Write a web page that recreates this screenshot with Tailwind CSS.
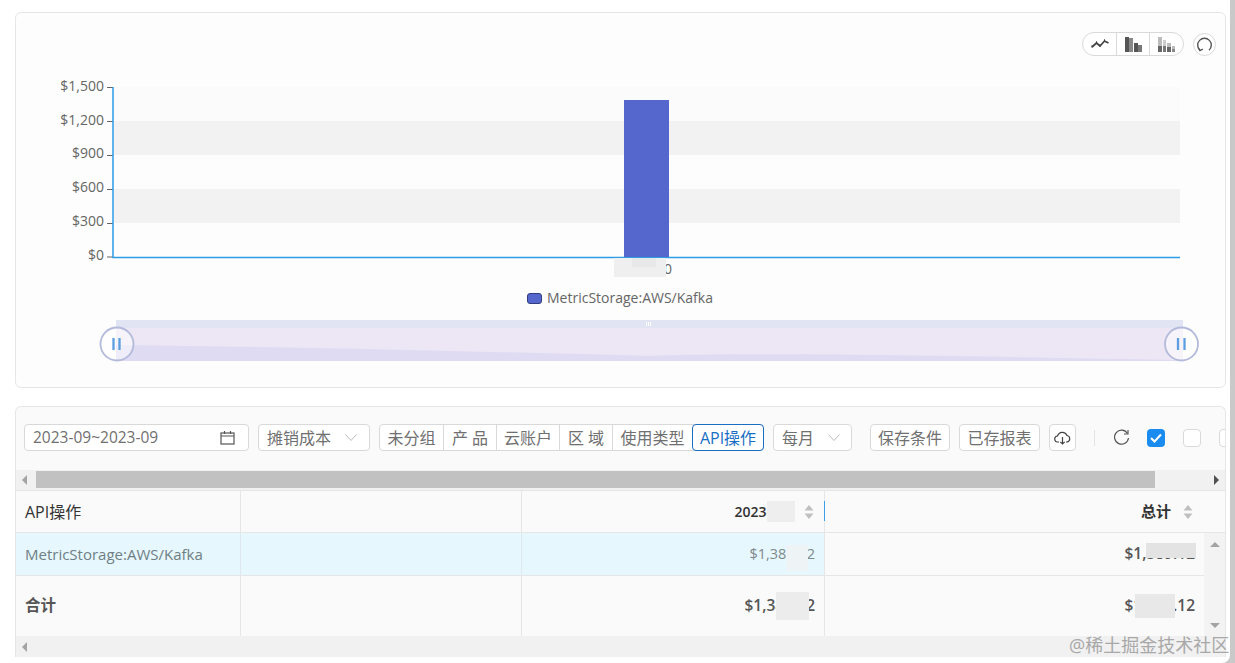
<!DOCTYPE html>
<html lang="zh-CN">
<head>
<meta charset="UTF-8" />
<meta name="viewport" content="width=device-width, initial-scale=1.0" />
<title>成本报表</title>
<script src="https://cdn.jsdelivr.net/npm/@tailwindcss/browser@4"></script>
</head>
<body class="bg-[#c9c9c9] overflow-hidden h-[663px] font-['Open_Sans','Noto_Sans_CJK_SC',sans-serif] text-[14px] text-[#666]">
<div class="relative w-[1230px] h-[663px] bg-white rounded-br-lg pt-3 pl-[15px] overflow-hidden">

  <!-- chart card -->
  <section class="w-[1211px] h-[376px] bg-[#fdfdfd] border border-[#e6e6e6] rounded-md">
    <div class="flex justify-end items-center gap-[9px] pt-[19px] pr-[9px] h-[43px]">
      <div class="flex h-6 border border-[#d9d9d9] rounded-full bg-white">
        <button class="w-[34px] flex items-center justify-center border-r border-[#d9d9d9]">
          <svg width="18" height="12" viewBox="0 0 18 12" fill="none" stroke="#444" stroke-width="1.700"><path d="M1 9l4.500-4 3.500 3 4.500-5 4 2"/><path d="M.5 8.500h1M5 4.500h1M8.500 7.500h1M13 2.500h1" stroke-width="2.500"/></svg>
        </button>
        <button class="w-[33px] flex items-center justify-center border-r border-[#d9d9d9]">
          <svg width="17" height="15" viewBox="0 0 17 15"><rect x="0" y="0" width="4" height="15" fill="#555"/><rect x="4" y="1" width="4" height="14" fill="#888"/><rect x="9" y="6" width="4" height="9" fill="#555"/><rect x="13" y="8" width="4" height="7" fill="#777"/></svg>
        </button>
        <button class="w-[33px] flex items-center justify-center">
          <svg width="17" height="15" viewBox="0 0 17 15"><rect x="0" y="0" width="4" height="9" fill="#bbb"/><rect x="0" y="9" width="4" height="6" fill="#666"/><rect x="5" y="3" width="3" height="6" fill="#ccc"/><rect x="5" y="9" width="3" height="6" fill="#777"/><rect x="9" y="6" width="4" height="4" fill="#bbb"/><rect x="9" y="10" width="4" height="5" fill="#666"/><rect x="14" y="9" width="3" height="3" fill="#bbb"/><rect x="14" y="12" width="3" height="3" fill="#888"/></svg>
        </button>
      </div>
      <button class="w-[23px] h-[23px] flex items-center justify-center border border-[#d9d9d9] rounded-full bg-white">
        <svg width="17" height="17" viewBox="0 0 15 15" fill="none" stroke="#555" stroke-width="1.200"><path d="M3.500 12.500A6 6 0 1 1 11.500 12.500"/><path d="M2 10.200l1.500 2.600 2.500-1.200"/></svg>
      </button>
    </div>
    <!-- viewBox uses page coordinates -->
    <svg class="block" width="1209" height="331" viewBox="16 56 1209 331" font-family="'Open Sans','Noto Sans CJK SC',sans-serif" font-size="14" fill="#666">
      <rect x="114" y="87" width="1066" height="34" fill="#fbfbfb"/>
      <rect x="114" y="121" width="1066" height="34" fill="#f2f2f2"/>
      <rect x="114" y="155" width="1066" height="34" fill="#fdfdfd"/>
      <rect x="114" y="189" width="1066" height="34" fill="#f2f2f2"/>
      <rect x="114" y="223" width="1066" height="34" fill="#fdfdfd"/>
      <path d="M107 87.500h6M107 121.500h6M107 155.500h6M107 189.500h6M107 223.500h6M107 257h6" stroke="#666" stroke-width="1"/>
      <path d="M113 87V257.500H1180" fill="none" stroke="#2e9be6" stroke-width="1.500"/>
      <g text-anchor="end">
        <text x="104" y="90.500">$1,500</text>
        <text x="104" y="124.500">$1,200</text>
        <text x="104" y="158">$900</text>
        <text x="104" y="192">$600</text>
        <text x="104" y="226">$300</text>
        <text x="104" y="260">$0</text>
      </g>
      <rect x="624" y="100" width="45" height="157" fill="#5566cc"/>
      <text x="664" y="274">0</text>
      <rect x="614" y="258" width="52" height="19" fill="#efefef"/>
      <rect x="632" y="258" width="24" height="9" fill="#e8e8e8"/>
      <rect x="527.500" y="293.500" width="14" height="10" rx="2.500" fill="#5566cc" stroke="#333d80"/>
      <text x="547" y="303">MetricStorage:AWS/Kafka</text>

      <!-- range slider -->
      <rect x="116" y="320" width="1067" height="8" fill="#e1e4f3"/>
      <rect x="116" y="328" width="1067" height="33" fill="#ece6f5"/>
      <path d="M116 345C300 347 500 352 650 356C750 352 950 356 1183 360V361H116Z" fill="#dedbf2"/>
      <path d="M646.500 322v4M648.500 322v4M650.500 322v4" stroke="#fff"/>
      <g fill="#ffffff" fill-opacity="0.5" stroke="#b3bada" stroke-width="1.800">
        <circle cx="117" cy="344" r="16.500"/>
        <circle cx="1181.500" cy="344" r="16.500"/>
      </g>
      <path d="M113.500 338v12M119.500 338v12M1178 338v12M1184.500 338v12" stroke="#5b9fe0" stroke-width="2.300"/>
    </svg>
  </section>

  <!-- report card -->
  <section class="mt-[18px] w-[1211px] h-[251px] bg-[#fafafa] border border-b-0 border-[#e6e6e6] rounded-t-md overflow-hidden">
    <div class="flex items-center h-[63px] pb-[2px] pl-2 whitespace-nowrap overflow-hidden text-[16px] text-[#707070]">
      <div class="shrink-0 w-[225px] h-[27px] bg-white border border-[#d9d9d9] rounded flex items-center justify-between pl-2 pr-[13px]">
        <span class="text-[15.500px]">2023-09~2023-09</span>
        <svg width="15" height="14" viewBox="0 0 15 14" fill="none" stroke="#555" stroke-width="1.200"><rect x="1" y="2" width="13" height="11"/><path d="M1 5h13M4.500 0v3M10.500 0v3"/></svg>
      </div>
      <div class="shrink-0 ml-[9px] w-28 h-[27px] bg-white border border-[#d9d9d9] rounded flex items-center justify-between pl-2 pr-[12px]">
        <span>摊销成本</span>
        <svg width="12" height="7" viewBox="0 0 12 7" fill="none" stroke="#bbb"><path d="M.5.500l5.500 6 5.500-6"/></svg>
      </div>
      <div class="shrink-0 ml-[9px] flex h-[27px] bg-white border border-[#d9d9d9] rounded">
        <span class="w-[64px] flex items-center justify-center border-r border-[#d9d9d9]">未分组</span>
        <span class="w-[53px] flex items-center justify-center border-r border-[#d9d9d9]">产 品</span>
        <span class="w-[63px] flex items-center justify-center border-r border-[#d9d9d9]">云账户</span>
        <span class="w-[53px] flex items-center justify-center border-r border-[#d9d9d9]">区 域</span>
        <span class="w-[79px] flex items-center justify-center">使用类型</span>
        <span class="w-[72px] -my-px -mr-px flex items-center justify-center border border-[#1a6fc4] rounded text-[#1a6fc4]">API操作</span>
      </div>
      <div class="shrink-0 ml-[9px] w-[79px] h-[27px] bg-white border border-[#d9d9d9] rounded flex items-center justify-between pl-2 pr-[11px]">
        <span>每月</span>
        <svg width="12" height="7" viewBox="0 0 12 7" fill="none" stroke="#bbb"><path d="M.5.500l5.500 6 5.500-6"/></svg>
      </div>
      <button class="shrink-0 ml-[18px] w-20 h-[27px] bg-white border border-[#d9d9d9] rounded">保存条件</button>
      <button class="shrink-0 ml-[9px] w-[81px] h-[27px] bg-white border border-[#d9d9d9] rounded">已存报表</button>
      <button class="shrink-0 ml-[9px] w-[27px] h-[27px] bg-white border border-[#d9d9d9] rounded flex items-center justify-center">
        <svg width="17" height="14" viewBox="0 0 17 14" fill="none" stroke="#444" stroke-width="1.200"><path d="M5 11H4A3 3 0 0 1 3.500 5 5 5 0 0 1 13 4.500 3.300 3.300 0 0 1 13 11h-1"/><path d="M8.500 6v7M6.300 10.800l2.200 2.200 2.200-2.200"/></svg>
      </button>
      <span class="shrink-0 ml-[18px] w-px h-[16px] bg-[#e3e3e3]"></span>
      <svg class="shrink-0 ml-[18px]" width="17" height="17" viewBox="0 0 17 17" fill="none" stroke="#555" stroke-width="1.200"><path d="M14.500 4.500A7 7 0 1 0 15.500 9"/><path d="M15 1v4h-4"/></svg>
      <span class="shrink-0 ml-[17px] w-[18px] h-[18px] bg-[#1a8cf0] rounded-sm flex items-center justify-center">
        <svg width="12" height="10" viewBox="0 0 12 10" fill="none" stroke="#fff" stroke-width="2"><path d="M1 5l3.500 3.500L11 1.500"/></svg>
      </span>
      <span class="shrink-0 ml-[18px] w-[18px] h-[18px] bg-white border border-[#d9d9d9] rounded-sm"></span>
      <span class="shrink-0 ml-[18px] w-[18px] h-[18px] bg-white border border-[#d9d9d9] rounded-sm"></span>
    </div>

    <!-- top scrollbar -->
    <div class="flex items-center justify-between h-5 bg-[#f1f1f1] pr-[6px] pl-[6px]">
      <span class="w-0 h-0 border-y-[5px] border-y-transparent border-r-[5px] border-r-[#a3a3a3]"></span>
      <span class="w-0 h-0 border-y-[5px] border-y-transparent border-l-[5px] border-l-[#505050]"></span>
    </div>

    <!-- table -->
    <div class="h-[43px] grid grid-cols-[225px_281px_303px_1fr] items-stretch border-t border-b border-[#e6e6e6] text-[#333] bg-[#fafafa]">
      <div class="flex items-center pl-[9px] border-r border-[#e6e6e6] text-[16px]">API操作</div>
      <div class="border-r border-[#e6e6e6]"></div>
      <div class="relative flex items-center justify-end gap-[9px] pr-[10px] border-r border-[#e6e6e6] font-semibold">
        <span class="relative pr-[8px]">2023-09<i class="absolute right-0 top-0 w-[28px] h-full bg-[#eeeeee]"></i></span>
        <svg width="10" height="16" viewBox="0 0 10 16" fill="#bfbfbf"><path d="M5 1l4.500 5.500h-9zM5 15L.5 9.500h9z"/></svg>
        <i class="absolute right-[-1px] top-[10px] w-px h-5 bg-[#3ca0e6]"></i>
      </div>
      <div class="flex items-center justify-end gap-[12px] pr-[32px] font-bold text-[15px]">
        <span>总计</span>
        <svg width="10" height="16" viewBox="0 0 10 16" fill="#bfbfbf"><path d="M5 1l4.500 5.500h-9zM5 15L.5 9.500h9z"/></svg>
      </div>
    </div>
    <div class="flex">
      <div class="w-[1188px]">
        <div class="h-[43px] grid grid-cols-[225px_281px_303px_1fr] border-b border-[#e6e6e6]">
          <div class="flex items-center pl-[9px] bg-[#e6f7fd] border-r border-[#dfe8ec] text-[#6f7f85] text-[15px]">MetricStorage:AWS/Kafka</div>
          <div class="bg-[#e6f7fd] border-r border-[#dfe8ec]"></div>
          <div class="flex items-center justify-end pr-[9px] bg-[#e6f7fd] border-r border-[#e6e6e6] text-[14.500px] text-[#7f8a8e]">
            <span class="relative">$1,389.12<i class="absolute left-[37px] top-[2px] w-[22px] h-[26px] bg-[#eef3f5]"></i></span>
          </div>
          <div class="flex items-center justify-end pr-[9px] font-semibold text-[#555] text-[15.500px]">
            <span class="relative">$1,389.12<i class="absolute left-[21px] top-[1px] w-[50px] h-[15px] bg-[#e3e3e3]"></i></span>
          </div>
        </div>
        <div class="h-[60px] grid grid-cols-[225px_281px_303px_1fr] font-semibold text-[#555] text-[15.500px]">
          <div class="flex items-center pl-[9px] border-r border-[#e6e6e6]">合计</div>
          <div class="border-r border-[#e6e6e6]"></div>
          <div class="flex items-center justify-end pr-[9px] border-r border-[#e6e6e6]">
            <span class="relative">$1,389.12<i class="absolute left-[31px] top-[-2px] w-[33px] h-[28px] bg-[#ececec]"></i></span>
          </div>
          <div class="flex items-center justify-end pr-[9px]">
            <span class="relative">$1,389.12<i class="absolute left-[10px] top-0 w-[40px] h-[24px] bg-[#e8e8e8]"></i></span>
          </div>
        </div>
      </div>
      <div class="w-[21px] h-[103px] bg-[#f3f3f3] flex flex-col items-center justify-between pt-[9px] pb-[8px]">
        <span class="w-0 h-0 border-x-[5px] border-x-transparent border-b-[5px] border-b-[#a3a3a3]"></span>
        <span class="w-0 h-0 border-x-[5px] border-x-transparent border-t-[5px] border-t-[#a3a3a3]"></span>
      </div>
    </div>
    <!-- bottom scrollbar -->
    <div class="flex items-center h-[22px] bg-[#f1f1f1] pl-[6px]">
      <span class="w-0 h-0 border-y-[5px] border-y-transparent border-r-[5px] border-r-[#a3a3a3]"></span>
    </div>
  </section>

  <!-- thumb over the scrollbar track -->
  <div class="absolute left-[36px] top-[471px] w-[1119px] h-[17px] bg-[#c1c1c1]"></div>
  <!-- watermark -->
  <div class="absolute left-[1069px] top-[632px] text-[18px] leading-[26px] text-[#a8a8a8]">@稀土掘金技术社区</div>
</div>
</body>
</html>
